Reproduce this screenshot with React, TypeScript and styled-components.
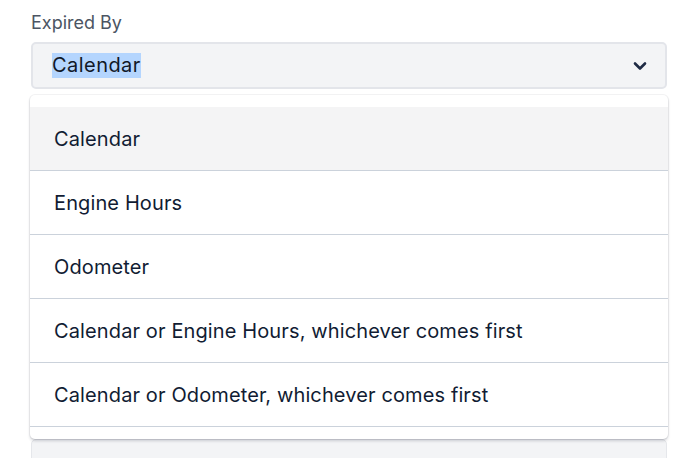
import React from 'react'
import styled, {createGlobalStyle} from 'styled-components'

const options = [
  'Calendar',
  'Engine Hours',
  'Odometer',
  'Calendar or Engine Hours, whichever comes first',
  'Calendar or Odometer, whichever comes first',
]

const GlobalStyle = createGlobalStyle`
  body {
    margin: 0;
    background: #ffffff;
    font-family: Inter, "Noto Sans", sans-serif;
  }
`

const Page = styled.div`
  width: 700px;
  height: 458px;
  overflow: hidden;
  padding: 12px 0 0 31px;
  box-sizing: border-box;
`

const Field = styled.div`
  position: relative;
  width: 636px;
`

const Label = styled.div`
  font-size: 18px;
  line-height: 22px;
  color: #4b5563;
  margin-bottom: 8px;
`

const SelectBox = styled.div`
  height: 47px;
  box-sizing: border-box;
  display: flex;
  align-items: center;
  justify-content: space-between;
  padding: 0 18px 0 19px;
  background: #f3f4f6;
  border: 2px solid #e3e5ea;
  border-radius: 5px;
`

const Value = styled.span`
  font-size: 20px;
  line-height: 25px;
  letter-spacing: 0.45px;
  color: #111827;
  background: #b4d5fe;
`

const Menu = styled.ul`
  position: absolute;
  top: 83px;
  left: -1px;
  right: -1px;
  margin: 0;
  padding: 12px 0;
  list-style: none;
  background: #ffffff;
  border-radius: 5px;
  box-shadow: 0 0 0 1px rgba(15, 23, 42, 0.05), 0 2px 3px rgba(15, 23, 42, 0.18);
  z-index: 2;
`

const Option = styled.li<{active?: boolean}>`
  height: 63px;
  display: flex;
  align-items: center;
  padding: 0 24px;
  border-bottom: 1px solid #cbd2db;
  background: ${props => (props.active ? '#f4f4f5' : '#ffffff')};
  font-size: 20px;
  letter-spacing: 0.12px;
  color: #111c33;
`

const NextField = styled.div`
  margin-top: 350px;
  height: 47px;
  background: #f3f4f6;
  border: 1px solid #e5e7eb;
  border-radius: 5px;
`

const Chevron = () => (
  <svg width="14" height="10" viewBox="0 0 14 10" fill="none">
    <path
      d="M2 2.5L7 7.5L12 2.5"
      stroke="#1e2a44"
      strokeWidth="2.6"
      strokeLinecap="round"
      strokeLinejoin="round"
    />
  </svg>
)

const App = () => (
  <Page>
    <GlobalStyle />
    <Field>
      <Label>Expired By</Label>
      <SelectBox>
        <Value>Calendar</Value>
        <Chevron />
      </SelectBox>
      <Menu>
        {options.map((option, i) => (
          <Option key={option} active={i === 0}>
            {option}
          </Option>
        ))}
      </Menu>
      <NextField />
    </Field>
  </Page>
)

export default App
